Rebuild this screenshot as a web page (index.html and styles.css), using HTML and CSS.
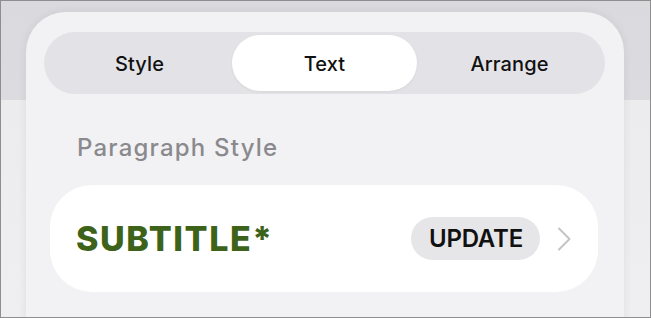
FILE: index.html
```html
<!DOCTYPE html>
<html>
<head>
<meta charset="utf-8">
<link rel="stylesheet" href="styles.css">
</head>
<body>
<div class="frame">
  <div class="panel">
    <div class="segmented">
      <div class="seg">Style</div>
      <div class="seg selected">Text</div>
      <div class="seg">Arrange</div>
    </div>
    <div class="section-title">Paragraph Style</div>
    <div class="card">
      <div class="style-name">SUBTITLE*</div>
      <div class="update">UPDATE</div>
      <svg class="chevron" width="14" height="24" viewBox="0 0 14 24">
        <path d="M2 1.5 L12.5 12 L2 22.5" fill="none" stroke="#c3c3c6" stroke-width="2" stroke-linecap="round" stroke-linejoin="round"/>
      </svg>
    </div>
  </div>
</div>
</body>
</html>
```
FILE: styles.css
```css
html, body {
  margin: 0;
  padding: 0;
}
body {
  width: 651px;
  height: 318px;
  overflow: hidden;
  font-family: Inter, "Noto Sans", sans-serif;
}
.frame {
  box-sizing: border-box;
  width: 651px;
  height: 318px;
  border: 1px solid #8e8e90;
  background: linear-gradient(to bottom, #dadade 0, #dcdce0 99px, #ececee 99px, #efeff1 100%);
  overflow: hidden;
  padding: 11px 0 0 25px;
}
.panel {
  box-sizing: border-box;
  width: 598px;
  height: 360px;
  border-radius: 40px;
  background: #f2f2f4;
  box-shadow: 0 0 10px rgba(0, 0, 0, 0.07);
  padding: 20px 19px 0 18px;
}
.segmented {
  display: grid;
  grid-template-columns: 1fr 1fr 1fr;
  height: 62px;
  box-sizing: border-box;
  padding: 3px;
  border-radius: 31px;
  background: #e3e3e7;
}
.seg {
  display: flex;
  align-items: center;
  justify-content: center;
  font-size: 20px;
  font-weight: 500;
  color: #111;
  border-radius: 28px;
  letter-spacing: 0.1px;
  padding-top: 1px;
}
.seg.selected {
  background: #fff;
  box-shadow: 0 1px 3px rgba(0, 0, 0, 0.06);
}
.section-title {
  margin: 40px 0 0 33px;
  font-size: 24px;
  font-weight: 500;
  color: #8a8a8e;
  line-height: 28px;
  letter-spacing: 1.2px;
}
.card {
  margin: 23px 7px 0 6px;
  height: 107px;
  border-radius: 42px;
  background: #fff;
  display: flex;
  align-items: center;
  padding: 0 27px 0 26px;
}
.style-name {
  flex: 1;
  font-size: 34px;
  font-weight: 800;
  color: #3d6219;
  letter-spacing: 1.6px;
}
.update {
  height: 43px;
  box-sizing: border-box;
  padding: 0 17px 0 18px;
  border-radius: 22px;
  background: #e6e6e8;
  display: flex;
  align-items: center;
  font-size: 24px;
  font-weight: 600;
  color: #111;
  letter-spacing: -0.2px;
}
.chevron {
  margin-left: 17px;
}
```
